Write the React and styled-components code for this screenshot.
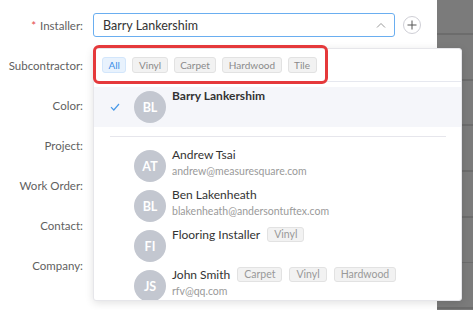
import React from "react";
import styled, { createGlobalStyle } from "styled-components";

const Global = createGlobalStyle`
  html, body { margin: 0; padding: 0; background: #fff; }
  body { font-family: Lato, "Open Sans", sans-serif; }
`;

const Page = styled.div`
  display: grid;
  grid-template-columns: 437px 1fr;
  width: 473px;
  height: 310px;
  overflow: hidden;
`;

const Form = styled.div`
  display: flex;
  flex-direction: column;
  padding-top: 5px;
`;

const Row = styled.div`
  display: flex;
  align-items: center;
  height: 40px;
  gap: 10px;
`;

const Label = styled.div`
  width: 83px;
  text-align: right;
  font-size: 11.5px;
  color: #5f5f5f;
  white-space: nowrap;
`;

const Star = styled.span`
  color: #e5484d;
  margin-right: 4px;
`;

const FieldWrap = styled.div`
  position: relative;
  display: flex;
  align-items: center;
  gap: 8px;
`;

const Select = styled.div`
  box-sizing: border-box;
  width: 302px;
  height: 24px;
  border: 1px solid #6aaef0;
  border-radius: 3px;
  display: flex;
  align-items: center;
  justify-content: space-between;
  padding: 0 8px 0 9px;
  font-size: 12.5px;
  color: #333;
`;

const AddButton = styled.div`
  box-sizing: border-box;
  width: 18px;
  height: 18px;
  border-radius: 50%;
  border: 1px solid #cfcfd6;
  display: flex;
  align-items: center;
  justify-content: center;
`;

const Canvas = styled.div`
  background-color: #7b7b7b;
  background-image: repeating-linear-gradient(
    to bottom,
    transparent 0,
    transparent 33px,
    #6c6c6c 33px,
    #6c6c6c 35px,
    transparent 35px,
    transparent 45.7px
  );
`;

const Dropdown = styled.div`
  position: absolute;
  left: 0;
  top: 35px;
  width: 369px;
  height: 253px;
  box-sizing: border-box;
  background: #fff;
  border: 1px solid #e6e6ea;
  border-radius: 3px;
  box-shadow: 0 2px 8px rgba(0, 0, 0, 0.12);
  overflow: hidden;
  z-index: 5;
`;

const Header = styled.div`
  display: flex;
  gap: 6px;
  padding: 8px 8px 0 8px;
  height: 33px;
  box-sizing: border-box;
  border-bottom: 1px solid #e6e8ef;
`;

const Highlight = styled.div`
  position: absolute;
  left: 0;
  top: 32px;
  width: 235px;
  height: 39px;
  box-sizing: border-box;
  border: 3.5px solid #e5393b;
  border-radius: 6px;
  pointer-events: none;
  z-index: 6;
`;

const Chip = styled.span`
  box-sizing: border-box;
  height: 16px;
  display: inline-flex;
  align-items: center;
  padding: 0 5.5px;
  font-size: 10px;
  border-radius: 3px;
  border: 1px solid ${(p) => (p.$active ? "#d3e6fb" : "#e2e2e2")};
  background: ${(p) => (p.$active ? "#e8f2fd" : "#f2f2f2")};
  color: ${(p) => (p.$active ? "#3b8ee8" : "#8a8a8a")};
`;

const List = styled.div`
  padding-top: 5px;
`;

const Item = styled.div`
  display: flex;
  align-items: flex-start;
  height: 40px;
  padding: 4px 0 0 0;
  box-sizing: border-box;
  background: ${(p) => (p.$selected ? "#f5f6fa" : "transparent")};
`;

const CheckCell = styled.div`
  width: 40px;
  height: 32px;
  display: flex;
  align-items: center;
  justify-content: center;
  padding-left: 2px;
  box-sizing: border-box;
`;

const Avatar = styled.div`
  width: 32px;
  height: 32px;
  border-radius: 50%;
  background: #c3c7d0;
  color: #fff;
  font-size: 12.5px;
  font-weight: 700;
  display: flex;
  align-items: center;
  justify-content: center;
  flex-shrink: 0;
`;

const Info = styled.div`
  margin-left: 6px;
  display: flex;
  flex-direction: column;
`;

const NameLine = styled.div`
  display: flex;
  align-items: center;
  gap: 7px;
  height: 16px;
  margin-top: -4px;
`;

const Name = styled.span`
  font-size: 12px;
  color: #333;
  font-weight: ${(p) => (p.$bold ? 700 : 400)};
`;

const Tag = styled.span`
  box-sizing: border-box;
  height: 15px;
  display: inline-flex;
  align-items: center;
  padding: 0 6px;
  font-size: 10.5px;
  border-radius: 3px;
  border: 1px solid #e2e2e2;
  background: #f2f2f2;
  color: #999;
`;

const Email = styled.div`
  font-size: 10.5px;
  color: #9a9a9a;
  margin-top: 3px;
`;

const Divider = styled.div`
  height: 1px;
  background: #e6e6ec;
  margin: 9px 15px 9px 16px;
`;

const labels = ["Subcontractor:", "Color:", "Project:", "Work Order:", "Contact:", "Company:"];
const filters = ["All", "Vinyl", "Carpet", "Hardwood", "Tile"];

const people = [
  { initials: "AT", name: "Andrew Tsai", email: "andrew@measuresquare.com", tags: [] },
  { initials: "BL", name: "Ben Lakenheath", email: "blakenheath@andersontuftex.com", tags: [] },
  { initials: "FI", name: "Flooring Installer", email: "", tags: ["Vinyl"] },
  { initials: "JS", name: "John Smith", email: "rfv@qq.com", tags: ["Carpet", "Vinyl", "Hardwood"] },
];

function Person({ p, selected }) {
  return (
    <Item $selected={selected}>
      <CheckCell>
        {selected && (
          <svg width="10" height="8" viewBox="0 0 10 8">
            <path d="M1 4.2 L3.8 7 L9 1" fill="none" stroke="#4a9ae8" strokeWidth="1.2" />
          </svg>
        )}
      </CheckCell>
      <Avatar>{p.initials}</Avatar>
      <Info>
        <NameLine>
          <Name $bold={selected}>{p.name}</Name>
          {p.tags.map((t) => (
            <Tag key={t}>{t}</Tag>
          ))}
        </NameLine>
        {p.email && <Email>{p.email}</Email>}
      </Info>
    </Item>
  );
}

export default function App() {
  return (
    <>
      <Global />
      <Page>
        <Form>
          <Row>
            <Label>
              <Star>*</Star>Installer:
            </Label>
            <FieldWrap>
              <Select>
                <span>Barry Lankershim</span>
                <svg width="10" height="6" viewBox="0 0 10 6">
                  <path d="M1 5.5 L5 1.5 L9 5.5" fill="none" stroke="#999" strokeWidth="1" />
                </svg>
              </Select>
              <AddButton>
                <svg width="10" height="10" viewBox="0 0 10 10">
                  <path d="M5 0.5 V9.5 M0.5 5 H9.5" stroke="#555" strokeWidth="1" />
                </svg>
              </AddButton>
              <Dropdown>
                <Header>
                  {filters.map((f, i) => (
                    <Chip key={f} $active={i === 0}>
                      {f}
                    </Chip>
                  ))}
                </Header>
                <List>
                  <Person p={{ initials: "BL", name: "Barry Lankershim", email: "", tags: [] }} selected />
                  <Divider />
                  {people.map((p) => (
                    <Person key={p.name} p={p} />
                  ))}
                </List>
              </Dropdown>
              <Highlight />
            </FieldWrap>
          </Row>
          {labels.map((l) => (
            <Row key={l}>
              <Label>{l}</Label>
            </Row>
          ))}
        </Form>
        <Canvas />
      </Page>
    </>
  );
}
